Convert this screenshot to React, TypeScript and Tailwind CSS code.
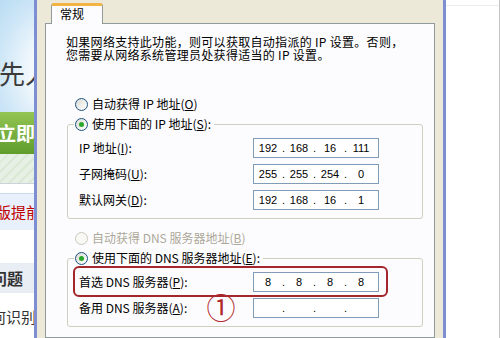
import { Fragment } from 'react';

function Radio({ checked, disabled }: { checked?: boolean; disabled?: boolean }) {
  return (
    <span
      className={`flex h-[13px] w-[13px] shrink-0 items-center justify-center rounded-full border ${
        disabled ? 'border-[#cac8bb] bg-[#f8f8f4]' : 'border-[#1c5180] bg-linear-to-br from-[#dcdcd4] to-white'
      }`}
    >
      {checked && <span className="h-[5px] w-[5px] rounded-full bg-[#2aa62a]" />}
    </span>
  );
}

function IpBox({ parts }: { parts: string[] }) {
  return (
    <div className="flex h-[20px] w-[126px] items-center border border-[#7f9db9] bg-white pl-[2px] font-['Liberation_Sans',sans-serif] text-[11px] text-black">
      {parts.map((p, i) => (
        <Fragment key={i}>
          <span className="w-[24px] text-center">{p}</span>
          {i < 3 && <span className="w-[7px] text-center">.</span>}
        </Fragment>
      ))}
    </div>
  );
}

function Row({ label, parts }: { label: React.ReactNode; parts: string[] }) {
  return (
    <div className="flex h-[20px] items-center">
      <span className="w-[174px]">{label}</span>
      <IpBox parts={parts} />
    </div>
  );
}

export default function App() {
  return (
    <div className="flex h-[338px] w-[500px] overflow-hidden bg-white font-['Noto_Sans_CJK_SC',sans-serif] text-[12px] leading-[12px] text-black">
      {/* web page behind the dialog */}
      <div className="flex w-[34px] shrink-0 flex-col overflow-hidden whitespace-nowrap">
        <div className="h-[112px] bg-[radial-gradient(ellipse_at_60px_70px,#ffffff_0%,#f2f8fc_35%,#cfe7f7_70%,#b9dcf3_100%)] pt-[58px]">
          <span className="-ml-[1px] block text-[26px] leading-[30px] text-[#3a3a3a]">先人</span>
        </div>
        <div className="flex h-[42px] items-center bg-linear-to-b from-[#93c553] to-[#5f9d2b]">
          <span className="-ml-[3px] text-[19px] font-bold leading-[22px] text-white">立即</span>
        </div>
        <div className="h-[29px] bg-[repeating-linear-gradient(135deg,#e6f0e4_0px,#e6f0e4_5px,#d9e9d6_5px,#d9e9d6_7px)]" />
        <div className="h-[10px] border-t border-[#cdd3d8] bg-white" />
        <div className="flex h-[37px] items-center border-t border-[#c9d8ea] bg-[#e8f1fb]">
          <span className="-ml-[4px] text-[15px] leading-[16px] text-[#c00000]">版提前活</span>
        </div>
        <div className="h-[33px] bg-white" />
        <div className="flex h-[30px] items-center bg-[#e9eef5]">
          <span className="-ml-[9px] text-[16px] font-bold leading-[18px] text-[#333]">问题</span>
        </div>
        <div className="flex-1 bg-white pt-[16px]">
          <span className="-ml-[9px] block text-[15px] leading-[16px] text-[#333]">何识别</span>
        </div>
      </div>

      <div className="w-[3px] shrink-0 bg-[#7d8fd2]" />

      {/* dialog */}
      <div className="flex w-[406px] shrink-0 flex-col bg-[#ece9d8] px-[8px] pt-[3px]">
        <div className="flex">
          <div className="relative z-10 -mb-px ml-[6px] flex h-[21px] w-[52px] items-center rounded-t-[3px] border-x border-t-[3px] border-x-[#919b9c] border-t-[#f2b445] bg-[#fcfcfe] pl-[8px] pb-[2px]">
            常规
          </div>
        </div>
        <div className="flex flex-1 flex-col border border-[#919b9c] bg-[#fcfcfe]">
          <p className="ml-[20px] mt-[11px] leading-[13px] tracking-[0.3px]">
            如果网络支持此功能，则可以获取自动指派的 IP 设置。否则，
            <br />
            您需要从网络系统管理员处获得适当的 IP 设置。
          </p>

          <div className="ml-[29px] mt-[36px] flex h-[14px] items-center gap-[4px]">
            <Radio />
            <span>
              自动获得 IP 地址(<u>O</u>)
            </span>
          </div>

          <div className="ml-[21px] mt-[13px] flex w-[356px] flex-col rounded-[3px] border border-[#d0d0bf] pb-[8px] pl-[11px]">
            <div className="-ml-[5px] -mt-[8px] flex h-[14px] items-center gap-[4px] self-start bg-[#fcfcfe] pl-[1px] pr-[3px]">
              <Radio checked />
              <span>
                使用下面的 IP 地址(<u>S</u>):
              </span>
            </div>
            <div className="mt-[7px] flex flex-col gap-[6px]">
              <Row label={<>IP 地址(<u>I</u>):</>} parts={['192', '168', '16', '111']} />
              <Row label={<>子网掩码(<u>U</u>):</>} parts={['255', '255', '254', '0']} />
              <Row label={<>默认网关(<u>D</u>):</>} parts={['192', '168', '16', '1']} />
            </div>
          </div>

          <div className="ml-[29px] mt-[12px] flex h-[14px] items-center gap-[4px] text-[#aca899]">
            <Radio disabled />
            <span>
              自动获得 DNS 服务器地址(<u>B</u>)
            </span>
          </div>

          <div className="relative ml-[21px] mt-[13px] flex w-[356px] flex-col rounded-[3px] border border-[#d0d0bf] pb-[8px] pl-[11px]">
            <div className="-ml-[5px] -mt-[8px] flex h-[14px] items-center gap-[4px] self-start bg-[#fcfcfe] pl-[1px] pr-[3px]">
              <Radio checked />
              <span>
                使用下面的 DNS 服务器地址(<u>E</u>):
              </span>
            </div>
            <div className="mt-[7px] flex flex-col gap-[6px]">
              <Row label={<>首选 DNS 服务器(<u>P</u>):</>} parts={['8', '8', '8', '8']} />
              <Row label={<>备用 DNS 服务器(<u>A</u>):</>} parts={['', '', '', '']} />
            </div>
            {/* annotation */}
            <div className="absolute left-[5px] top-[7px] h-[31px] w-[315px] rounded-[6px] border-2 border-[#a3262a]" />
            <span className="absolute left-[140px] top-[37px] flex h-[26px] w-[26px] items-center justify-center font-['DejaVu_Serif','Noto_Sans_CJK_SC',serif] text-[29px] leading-[26px] text-[#b02a2c]">
              ①
            </span>
          </div>
        </div>
      </div>

      <div className="w-[3px] shrink-0 bg-[#7d8fd2]" />

      <div className="flex-1 border-r border-[#c4c4c4] bg-white pt-[5px]">
        <div className="h-px bg-[#ececec]" />
      </div>
    </div>
  );
}
